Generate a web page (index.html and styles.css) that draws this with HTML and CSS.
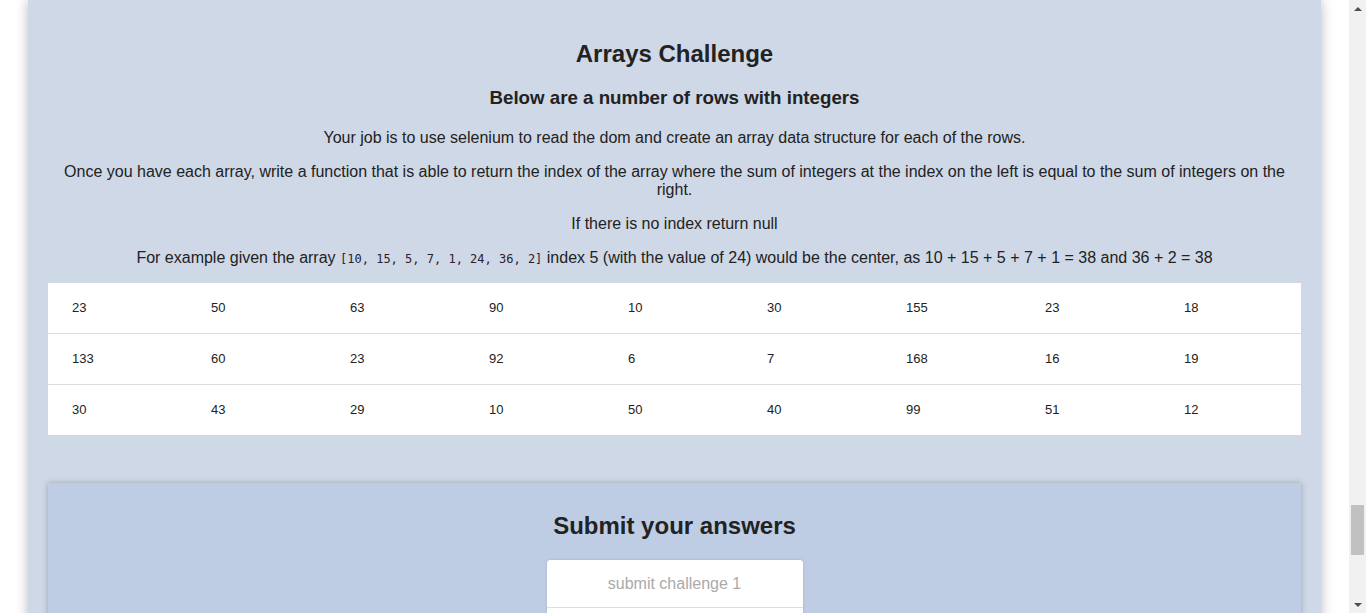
FILE: index.html
```html
<!DOCTYPE html>
<html lang="en">
<head>
<meta charset="utf-8">
<title>Arrays Challenge</title>
<link rel="stylesheet" href="styles.css">
</head>
<body>
<div class="viewport">
  <div class="page">
    <section class="panel">
      <h2 class="title">Arrays Challenge</h2>
      <h3 class="subtitle">Below are a number of rows with integers</h3>
      <p class="text">Your job is to use selenium to read the dom and create an array data structure for each of the rows.</p>
      <p class="text">Once you have each array, write a function that is able to return the index of the array where the sum of integers at the index on the left is equal to the sum of integers on the right.</p>
      <p class="text">If there is no index return null</p>
      <p class="text">For example given the array <code class="code">[10, 15, 5, 7, 1, 24, 36, 2]</code> index 5 (with the value of 24) would be the center, as 10 + 15 + 5 + 7 + 1 = 38 and 36 + 2 = 38</p>
      <table class="grid">
        <tr><td>23</td><td>50</td><td>63</td><td>90</td><td>10</td><td>30</td><td>155</td><td>23</td><td>18</td></tr>
        <tr><td>133</td><td>60</td><td>23</td><td>92</td><td>6</td><td>7</td><td>168</td><td>16</td><td>19</td></tr>
        <tr><td>30</td><td>43</td><td>29</td><td>10</td><td>50</td><td>40</td><td>99</td><td>51</td><td>12</td></tr>
      </table>
      <div class="submit-card">
        <h2 class="title submit-title">Submit your answers</h2>
        <div class="inputs">
          <input class="answer" type="text" placeholder="submit challenge 1">
          <input class="answer" type="text" placeholder="submit challenge 2">
          <input class="answer" type="text" placeholder="submit challenge 3">
        </div>
      </div>
    </section>
  </div>
  <div class="scrollbar">
    <div class="arrow up"></div>
    <div class="track">
      <div class="thumb"></div>
    </div>
    <div class="arrow down"></div>
  </div>
</div>
</body>
</html>
```

FILE: styles.css
```css
html, body {
  margin: 0;
  padding: 0;
  background: #ffffff;
  font-family: "Liberation Sans", Arial, sans-serif;
  color: #222222;
}

.viewport {
  display: flex;
  height: 613px;
  overflow: hidden;
}

.page {
  flex: 1;
  overflow: hidden;
  padding: 0 28px 0 28px;
}

.panel {
  background: #cfd8e6;
  box-shadow: 0 0 12px rgba(0, 0, 0, 0.28);
  padding: 40px 20px 40px;
  text-align: center;
}

.title {
  font-size: 24px;
  line-height: 28px;
  font-weight: bold;
  margin: 0 0 19px;
}

.subtitle {
  font-size: 18.72px;
  line-height: 22px;
  font-weight: bold;
  margin: 0 0 20px;
}

.text {
  font-size: 16px;
  line-height: 18px;
  margin: 0 0 16px;
}

.text:last-of-type {
  margin-bottom: 15px;
}

.code {
  font-family: "DejaVu Sans Mono", "Liberation Mono", monospace;
  font-size: 12px;
  color: #2a2230;
}

.grid {
  width: 100%;
  border-collapse: collapse;
  background: #ffffff;
  table-layout: fixed;
  text-align: left;
}

.grid td {
  height: 49px;
  padding: 0 0 1px 24px;
  font-size: 13px;
  color: #222222;
  vertical-align: middle;
}

.grid td:not(:last-child) {
  width: 115px;
}

.grid tr + tr td {
  border-top: 1px solid #dddddd;
}

.submit-card {
  margin-top: 48px;
  background: #bfcde4;
  box-shadow: 0 0 6px rgba(0, 0, 0, 0.25);
  padding: 29px 0 40px;
}

.submit-title {
  margin-bottom: 20px;
}

.inputs {
  width: 256px;
  margin: 0 auto;
  display: flex;
  flex-direction: column;
  background: #ffffff;
  border-radius: 4px;
  box-shadow: 0 0 3px rgba(0, 0, 0, 0.15);
}

.answer {
  height: 48px;
  box-sizing: border-box;
  border: none;
  border-bottom: 1px solid #dddddd;
  background: #ffffff;
  text-align: center;
  font-family: "Liberation Sans", Arial, sans-serif;
  font-size: 16px;
  padding: 0;
  border-radius: 4px 4px 0 0;
}

.answer::placeholder {
  color: #aaaaaa;
}

.scrollbar {
  width: 17px;
  flex: 0 0 17px;
  background: #f1f1f1;
  display: flex;
  flex-direction: column;
}

.arrow {
  height: 17px;
  display: flex;
  align-items: center;
  justify-content: center;
}

.arrow::before {
  content: "";
  width: 0;
  height: 0;
  border-left: 4px solid transparent;
  border-right: 4px solid transparent;
}

.arrow.up::before {
  border-bottom: 4px solid #505050;
}

.arrow.down::before {
  border-top: 4px solid #505050;
}

.track {
  flex: 1;
  padding: 488px 2px 0;
}

.thumb {
  height: 50px;
  background: #c1c1c1;
}
```
